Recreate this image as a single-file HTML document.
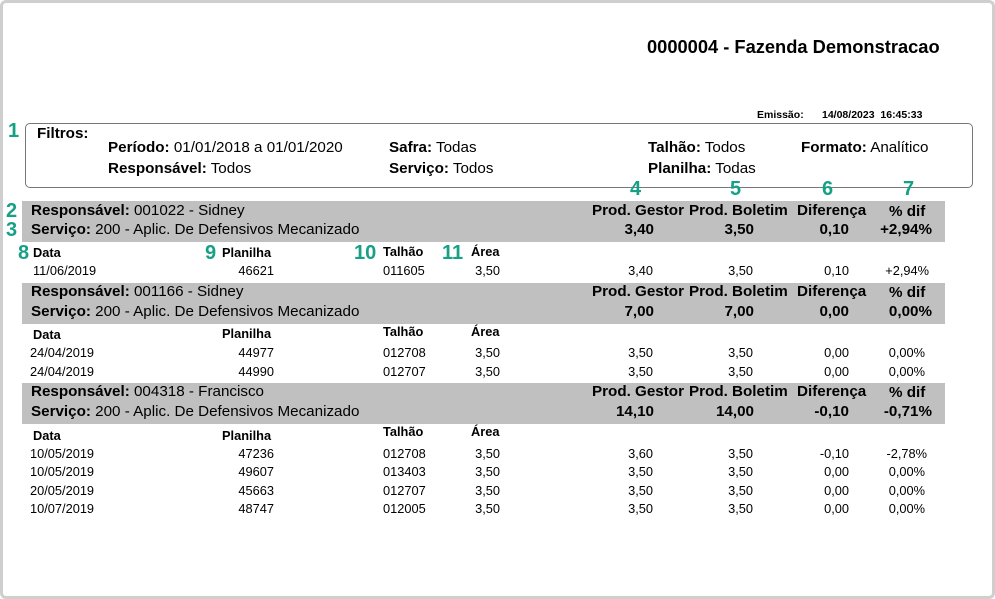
<!DOCTYPE html>
<html><head><meta charset="utf-8"><style>
*{margin:0;padding:0;box-sizing:border-box}
body{width:995px;height:599px;background:#fff;font-family:"Liberation Sans",Arial,sans-serif;color:#000;position:relative;overflow:hidden}
.frame{position:absolute;left:0;top:0;width:995px;height:599px;border:3px solid #cfcfcf;border-radius:6px}
.a{position:absolute;white-space:nowrap;height:16px;line-height:16px}
.b{font-weight:bold}
.h{font-size:15.2px}
.s{font-size:12.8px}
.r{text-align:right}
.c{text-align:center}
.g{color:#17a086;font-weight:bold;font-size:20px;height:20px;line-height:20px}
.band{position:absolute;left:22px;width:923px;background:#c0c0c0}
.box{position:absolute;left:25px;top:123px;width:948px;height:65px;border:1px solid #777;border-radius:5px}
</style></head><body>
<div class="frame"></div>
<div class="a b" style="left:647px;top:37px;font-size:18.3px;height:20px;line-height:20px">0000004 - Fazenda Demonstracao</div>
<div class="a b" style="left:757px;top:107px;font-size:10.5px">Emissão:</div>
<div class="a b" style="left:822px;top:107px;font-size:10.5px">14/08/2023&nbsp; 16:45:33</div>

<div class="box"></div>
<div class="a b h" style="left:37px;top:126px">Filtros:</div>
<div class="a h" style="left:108px;top:140px"><b>Período:</b> 01/01/2018 a 01/01/2020</div>
<div class="a h" style="left:108px;top:161px"><b>Responsável:</b> Todos</div>
<div class="a h" style="left:389px;top:140px"><b>Safra:</b> Todas</div>
<div class="a h" style="left:389px;top:161px"><b>Serviço:</b> Todos</div>
<div class="a h" style="left:648px;top:140px"><b>Talhão:</b> Todos</div>
<div class="a h" style="left:648px;top:161px"><b>Planilha:</b> Todas</div>
<div class="a h" style="left:801px;top:140px"><b>Formato:</b> Analítico</div>

<div class="a g" style="left:8px;top:121px">1</div>
<div class="a g" style="left:6px;top:201px">2</div>
<div class="a g" style="left:6px;top:220px">3</div>
<div class="a g" style="left:630px;top:179px">4</div>
<div class="a g" style="left:730px;top:179px">5</div>
<div class="a g" style="left:822px;top:179px">6</div>
<div class="a g" style="left:903px;top:179px">7</div>
<div class="a g" style="left:18px;top:243px">8</div>
<div class="a g" style="left:205px;top:243px">9</div>
<div class="a g" style="left:354px;top:243px">10</div>
<div class="a g" style="left:442px;top:243px">11</div>

<!-- band 1 -->
<div class="band" style="top:201px;height:41px"></div>
<div class="a h" style="left:31px;top:203px"><b>Responsável:</b> 001022 - Sidney</div>
<div class="a h" style="left:31px;top:222px"><b>Serviço:</b> 200 - Aplic. De Defensivos Mecanizado</div>
<div class="a b h" style="left:592px;top:203px">Prod. Gestor</div>
<div class="a b h" style="left:689px;top:203px">Prod. Boletim</div>
<div class="a b h" style="left:797px;top:203px">Diferença</div>
<div class="a b h" style="left:889px;top:204px">% dif</div>
<div class="a b h r" style="left:574px;width:80px;top:222px">3,40</div>
<div class="a b h r" style="left:674px;width:80px;top:222px">3,50</div>
<div class="a b h r" style="left:769px;width:80px;top:222px">0,10</div>
<div class="a b h r" style="left:852px;width:80px;top:222px">+2,94%</div>
<div class="a b s" style="left:33px;top:245px">Data</div>
<div class="a b s" style="left:222px;top:245px">Planilha</div>
<div class="a b s" style="left:383px;top:244px">Talhão</div>
<div class="a b s" style="left:471px;top:244px">Área</div>
<div class="a s" style="left:33px;top:263px">11/06/2019</div>
<div class="a s r" style="left:194px;width:80px;top:263px">46621</div>
<div class="a s" style="left:383px;top:263px">011605</div>
<div class="a s r" style="left:420px;width:80px;top:263px">3,50</div>
<div class="a s r" style="left:573px;width:80px;top:263px">3,40</div>
<div class="a s r" style="left:673px;width:80px;top:263px">3,50</div>
<div class="a s r" style="left:769px;width:80px;top:263px">0,10</div>
<div class="a s r" style="left:849px;width:80px;top:263px">+2,94%</div>

<!-- band 2 -->
<div class="band" style="top:283px;height:41px"></div>
<div class="a h" style="left:31px;top:284px"><b>Responsável:</b> 001166 - Sidney</div>
<div class="a h" style="left:31px;top:304px"><b>Serviço:</b> 200 - Aplic. De Defensivos Mecanizado</div>
<div class="a b h" style="left:592px;top:284px">Prod. Gestor</div>
<div class="a b h" style="left:689px;top:284px">Prod. Boletim</div>
<div class="a b h" style="left:797px;top:284px">Diferença</div>
<div class="a b h" style="left:889px;top:285px">% dif</div>
<div class="a b h r" style="left:574px;width:80px;top:304px">7,00</div>
<div class="a b h r" style="left:674px;width:80px;top:304px">7,00</div>
<div class="a b h r" style="left:769px;width:80px;top:304px">0,00</div>
<div class="a b h r" style="left:852px;width:80px;top:304px">0,00%</div>
<div class="a b s" style="left:33px;top:327px">Data</div>
<div class="a b s" style="left:222px;top:326px">Planilha</div>
<div class="a b s" style="left:383px;top:324px">Talhão</div>
<div class="a b s" style="left:471px;top:324px">Área</div>
<div class="a s" style="left:30px;top:345px">24/04/2019</div>
<div class="a s r" style="left:194px;width:80px;top:345px">44977</div>
<div class="a s" style="left:383px;top:345px">012708</div>
<div class="a s r" style="left:420px;width:80px;top:345px">3,50</div>
<div class="a s r" style="left:573px;width:80px;top:345px">3,50</div>
<div class="a s r" style="left:673px;width:80px;top:345px">3,50</div>
<div class="a s r" style="left:769px;width:80px;top:345px">0,00</div>
<div class="a s r" style="left:845px;width:80px;top:345px">0,00%</div>
<div class="a s" style="left:30px;top:364px">24/04/2019</div>
<div class="a s r" style="left:194px;width:80px;top:364px">44990</div>
<div class="a s" style="left:383px;top:364px">012707</div>
<div class="a s r" style="left:420px;width:80px;top:364px">3,50</div>
<div class="a s r" style="left:573px;width:80px;top:364px">3,50</div>
<div class="a s r" style="left:673px;width:80px;top:364px">3,50</div>
<div class="a s r" style="left:769px;width:80px;top:364px">0,00</div>
<div class="a s r" style="left:845px;width:80px;top:364px">0,00%</div>

<!-- band 3 -->
<div class="band" style="top:383px;height:41px"></div>
<div class="a h" style="left:31px;top:384px"><b>Responsável:</b> 004318 - Francisco</div>
<div class="a h" style="left:31px;top:404px"><b>Serviço:</b> 200 - Aplic. De Defensivos Mecanizado</div>
<div class="a b h" style="left:592px;top:384px">Prod. Gestor</div>
<div class="a b h" style="left:689px;top:384px">Prod. Boletim</div>
<div class="a b h" style="left:797px;top:384px">Diferença</div>
<div class="a b h" style="left:889px;top:385px">% dif</div>
<div class="a b h r" style="left:574px;width:80px;top:404px">14,10</div>
<div class="a b h r" style="left:674px;width:80px;top:404px">14,00</div>
<div class="a b h r" style="left:769px;width:80px;top:404px">-0,10</div>
<div class="a b h r" style="left:852px;width:80px;top:404px">-0,71%</div>
<div class="a b s" style="left:33px;top:428px">Data</div>
<div class="a b s" style="left:222px;top:428px">Planilha</div>
<div class="a b s" style="left:383px;top:424px">Talhão</div>
<div class="a b s" style="left:471px;top:424px">Área</div>
<div class="a s" style="left:30px;top:446px">10/05/2019</div>
<div class="a s r" style="left:194px;width:80px;top:446px">47236</div>
<div class="a s" style="left:383px;top:446px">012708</div>
<div class="a s r" style="left:420px;width:80px;top:446px">3,50</div>
<div class="a s r" style="left:573px;width:80px;top:446px">3,60</div>
<div class="a s r" style="left:673px;width:80px;top:446px">3,50</div>
<div class="a s r" style="left:769px;width:80px;top:446px">-0,10</div>
<div class="a s r" style="left:847px;width:80px;top:446px">-2,78%</div>
<div class="a s" style="left:30px;top:464px">10/05/2019</div>
<div class="a s r" style="left:194px;width:80px;top:464px">49607</div>
<div class="a s" style="left:383px;top:464px">013403</div>
<div class="a s r" style="left:420px;width:80px;top:464px">3,50</div>
<div class="a s r" style="left:573px;width:80px;top:464px">3,50</div>
<div class="a s r" style="left:673px;width:80px;top:464px">3,50</div>
<div class="a s r" style="left:769px;width:80px;top:464px">0,00</div>
<div class="a s r" style="left:845px;width:80px;top:464px">0,00%</div>
<div class="a s" style="left:30px;top:483px">20/05/2019</div>
<div class="a s r" style="left:194px;width:80px;top:483px">45663</div>
<div class="a s" style="left:383px;top:483px">012707</div>
<div class="a s r" style="left:420px;width:80px;top:483px">3,50</div>
<div class="a s r" style="left:573px;width:80px;top:483px">3,50</div>
<div class="a s r" style="left:673px;width:80px;top:483px">3,50</div>
<div class="a s r" style="left:769px;width:80px;top:483px">0,00</div>
<div class="a s r" style="left:845px;width:80px;top:483px">0,00%</div>
<div class="a s" style="left:30px;top:501px">10/07/2019</div>
<div class="a s r" style="left:194px;width:80px;top:501px">48747</div>
<div class="a s" style="left:383px;top:501px">012005</div>
<div class="a s r" style="left:420px;width:80px;top:501px">3,50</div>
<div class="a s r" style="left:573px;width:80px;top:501px">3,50</div>
<div class="a s r" style="left:673px;width:80px;top:501px">3,50</div>
<div class="a s r" style="left:769px;width:80px;top:501px">0,00</div>
<div class="a s r" style="left:845px;width:80px;top:501px">0,00%</div>
</body></html>
